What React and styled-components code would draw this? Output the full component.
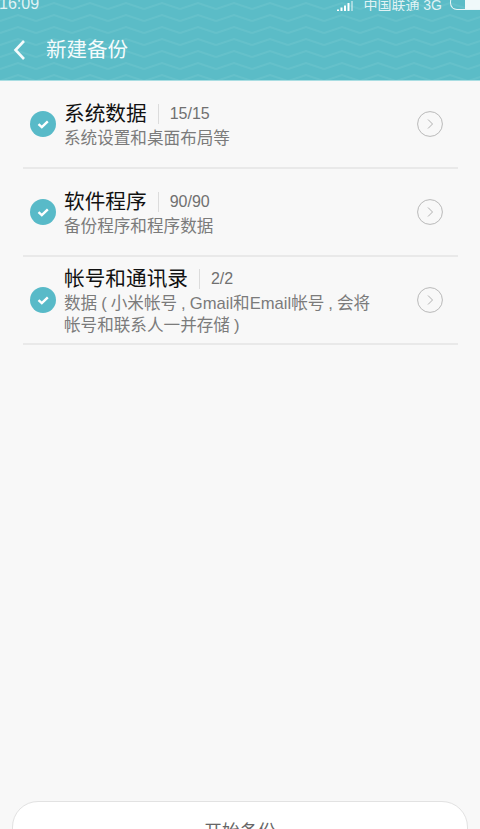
import styled, { createGlobalStyle } from "styled-components";

const GlobalStyle = createGlobalStyle`
  html, body {
    margin: 0;
    padding: 0;
    background: #f8f8f8;
  }
  * {
    box-sizing: border-box;
  }
`;

const Page = styled.div`
  position: relative;
  width: 480px;
  height: 829px;
  overflow: hidden;
  display: flex;
  flex-direction: column;
  background: #f8f8f8;
  font-family: "Liberation Sans", "Noto Sans CJK SC", sans-serif;
`;

const Header = styled.header`
  position: relative;
  height: 81px;
  flex: none;
  background: #5bbcc7;
  border-bottom: 1px solid #a9dde2;
  color: #fff;
`;

const Waves = styled.svg`
  position: absolute;
  inset: 0;
  width: 100%;
  height: 100%;
`;

const StatusBar = styled.div`
  position: relative;
  height: 11px;
  display: flex;
  align-items: flex-end;
  justify-content: space-between;
  overflow: hidden;
  font-size: 15px;
  line-height: 15px;
  color: rgba(255, 255, 255, 0.82);
`;

const Clock = styled.span`
  margin-left: -1px;
  font-size: 16px;
  line-height: 16px;
  margin-bottom: -1px;
`;

const StatusRight = styled.div`
  display: flex;
  align-items: flex-end;
  margin-right: -2px;
`;

const Carrier = styled.span`
  margin-left: 10px;
  font-size: 14px;
  line-height: 14px;
  margin-bottom: -1px;
`;

const Battery = styled.span`
  width: 32px;
  height: 15px;
  margin-left: 8px;
  margin-bottom: 1px;
  flex: none;
  border: 1px solid rgba(255, 255, 255, 0.85);
  border-radius: 7px 0 0 7px;
  border-right: 0;
  display: flex;
  justify-content: flex-end;
  &::after {
    content: "";
    width: 17px;
    background: rgba(255, 255, 255, 0.9);
  }
`;

const TitleBar = styled.div`
  position: relative;
  display: flex;
  align-items: center;
  height: 77px;
  padding-left: 12px;
`;

const Title = styled.h1`
  margin: 0 0 0 19px;
  font-size: 20.5px;
  line-height: 28px;
  font-weight: 400;
  color: #f4fbfc;
`;

const List = styled.main`
  display: flex;
  flex-direction: column;
  padding: 0 22px 0 23px;
`;

const Row = styled.section`
  height: 88px;
  display: flex;
  align-items: center;
  border-bottom: 2px solid #e9e9e9;
`;

const Check = styled.svg`
  flex: none;
  width: 26px;
  height: 26px;
  margin: 0 8px 0 7px;
`;

const RowBody = styled.div`
  flex: 1;
  min-width: 0;
  padding-top: 1px;
`;

const RowHead = styled.div`
  display: flex;
  align-items: center;
  height: 28px;
`;

const RowTitle = styled.span`
  font-size: 20.67px;
  line-height: 28px;
  color: #111;
`;

const Count = styled.span`
  margin-left: 11px;
  padding-left: 11px;
  border-left: 1px solid #dcdcdc;
  font-size: 16px;
  line-height: 20px;
  color: #707070;
`;

const Description = styled.p`
  margin: 0;
  width: 312px;
  font-size: 16.6px;
  line-height: 22px;
  word-spacing: -0.6px;
  color: #7b7b7b;
`;

const Arrow = styled.svg`
  flex: none;
  width: 26px;
  height: 26px;
  margin: 0 15px 0 0;
`;

const Footer = styled.div`
  position: absolute;
  left: 12px;
  right: 12px;
  top: 801px;
  height: 70px;
  padding-top: 16px;
  background: #fff;
  border: 1px solid #e2e2e2;
  border-radius: 26px;
  text-align: center;
  font-size: 18px;
  line-height: 28px;
  color: #666;
`;

const items = [
  { title: "系统数据", count: "15/15", text: "系统设置和桌面布局等" },
  { title: "软件程序", count: "90/90", text: "备份程序和程序数据" },
  {
    title: "帐号和通讯录",
    count: "2/2",
    text: "数据 ( 小米帐号 , Gmail和Email帐号 , 会将帐号和联系人一并存储 )",
  },
];

const App = () => {
  return (
    <Page>
      <GlobalStyle />
      <Header>
        <Waves aria-hidden="true">
          <defs>
            <pattern id="zigzag" width="36" height="12" patternUnits="userSpaceOnUse">
              <path
                d="M0 9 L18 3 L36 9"
                fill="none"
                stroke="#74c8d0"
                strokeWidth="2"
                opacity="0.4"
              />
            </pattern>
          </defs>
          <rect width="100%" height="100%" fill="url(#zigzag)" />
        </Waves>
        <StatusBar>
          <Clock>16:09</Clock>
          <StatusRight>
            <svg width="16" height="10" viewBox="0 0 16 10">
              <path d="M0 10h2V8.500H0zM3.500 10h2V6.500h-2zM7 10h2V4.500H7zM10.500 10h2V2h-2z" fill="#fff" />
              <path d="M14 10h2V0h-2z" fill="#fff" opacity="0.45" />
            </svg>
            <Carrier>中国联通 3G</Carrier>
            <Battery />
          </StatusRight>
        </StatusBar>
        <TitleBar>
          <svg width="15" height="22" viewBox="0 0 15 22">
            <path
              d="M12 2 L3.500 11 L12 20"
              fill="none"
              stroke="#f4fbfc"
              strokeWidth="2.600"
            />
          </svg>
          <Title>新建备份</Title>
        </TitleBar>
      </Header>
      <List>
        {items.map((item) => (
          <Row key={item.title}>
            <Check viewBox="0 0 26 26">
              <circle cx="13" cy="13" r="13" fill="#58bac8" />
              <path
                d="M8.500 13.200 L11.800 16.200 L17.800 10.400"
                fill="none"
                stroke="#fff"
                strokeWidth="2.400"
              />
            </Check>
            <RowBody>
              <RowHead>
                <RowTitle>{item.title}</RowTitle>
                <Count>{item.count}</Count>
              </RowHead>
              <Description>{item.text}</Description>
            </RowBody>
            <Arrow viewBox="0 0 26 26">
              <circle cx="13" cy="13" r="12.400" fill="none" stroke="#b9b9b9" strokeWidth="1" />
              <path d="M11 8.500 L15.500 13 L11 17.500" fill="none" stroke="#b0b0b0" strokeWidth="1" />
            </Arrow>
          </Row>
        ))}
      </List>
      <Footer>开始备份</Footer>
    </Page>
  );
};

export default App;
